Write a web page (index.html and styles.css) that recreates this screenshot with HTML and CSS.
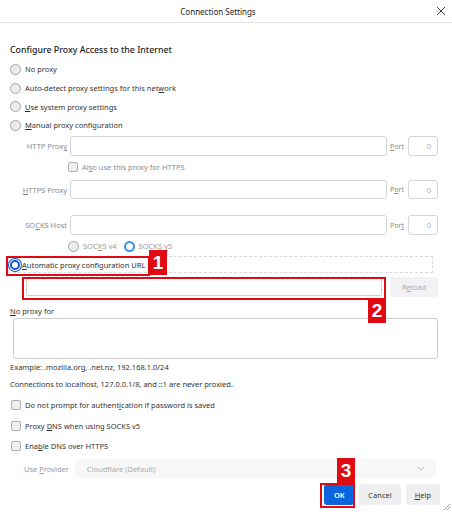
FILE: index.html
```html
<!DOCTYPE html>
<html>
<head>
<meta charset="utf-8">
<link rel="stylesheet" href="styles.css">
</head>
<body>
<div class="dialog">
  <header class="titlebar">
    <span class="title">Connection Settings</span>
    <svg class="close" width="10" height="10" viewBox="0 0 10 10"><path d="M1 1L9 9M9 1L1 9" stroke="#444" stroke-width="1" fill="none"/></svg>
  </header>
  <main class="content">
    <h1 class="heading">Configure Proxy Access to the Internet</h1>
    <div class="radio-list">
      <div class="opt"><span class="radio"></span><span>No proxy</span></div>
      <div class="opt"><span class="radio"></span><span>Auto-detect proxy settings for this net<u>w</u>ork</span></div>
      <div class="opt"><span class="radio"></span><span><u>U</u>se system proxy settings</span></div>
      <div class="opt"><span class="radio"></span><span><u>M</u>anual proxy configuration</span></div>
    </div>
    <div class="manual">
      <div class="field-row">
        <span class="flabel">HTTP Prox<u>y</u></span><span class="input"></span><span class="plabel"><u>P</u>ort</span><span class="port">0</span>
      </div>
      <div class="sub-check"><span class="checkbox"></span><span>Al<u>s</u>o use this proxy for HTTPS</span></div>
      <div class="field-row https">
        <span class="flabel"><u>H</u>TTPS Proxy</span><span class="input"></span><span class="plabel">P<u>o</u>rt</span><span class="port">0</span>
      </div>
      <div class="field-row socks">
        <span class="flabel">SO<u>C</u>KS Host</span><span class="input"></span><span class="plabel">Por<u>t</u></span><span class="port">0</span>
      </div>
      <div class="socks-ver">
        <span class="opt dim"><span class="radio"></span><span>SOC<u>K</u>S v4</span></span>
        <span class="opt dim"><span class="radio on"></span><span>SOCKS <u>v</u>5</span></span>
      </div>
    </div>
    <div class="auto-row">
      <div class="opt auto"><span class="radio focus"></span><span><u>A</u>utomatic proxy configuration URL</span></div>
    </div>
    <div class="pac-row">
      <span class="pac-input"></span>
      <span class="reload">R<u>e</u>load</span>
    </div>
    <div class="np-label"><u>N</u>o proxy for</div>
    <div class="textarea"></div>
    <div class="hint ex">Example: .mozilla.org, .net.nz, 192.168.1.0/24</div>
    <div class="hint conn">Connections to localhost, 127.0.0.1/8, and ::1 are never proxied.</div>
    <div class="checks">
      <div class="opt chk"><span class="checkbox"></span><span>Do not prompt for authent<u>i</u>cation if password is saved</span></div>
      <div class="opt chk"><span class="checkbox"></span><span>Proxy <u>D</u>NS when using SOCKS v5</span></div>
      <div class="opt chk"><span class="checkbox"></span><span>Ena<u>b</u>le DNS over HTTPS</span></div>
    </div>
    <div class="provider-row">
      <span class="prov-label">Use <u>P</u>rovider</span>
      <span class="select"><span>Cloudflare (Default)</span>
        <svg width="8" height="5" viewBox="0 0 8 5"><path d="M1 1L4 4L7 1" stroke="#bbb" stroke-width="1" fill="none"/></svg>
      </span>
    </div>
    <div class="buttons">
      <span class="btn ok">OK</span>
      <span class="btn">Cancel</span>
      <span class="btn"><u>H</u>elp</span>
    </div>
  </main>
  <svg class="grip" width="9" height="9" viewBox="0 0 9 9"><path d="M8 2L2 8M8 5L5 8" stroke="#999" stroke-width="1" fill="none"/></svg>

  <div class="mark box1"></div>
  <div class="badge b1">1</div>
  <div class="mark box2"></div>
  <div class="badge b2">2</div>
  <div class="mark box3"></div>
  <div class="badge b3">3</div>
</div>
</body>
</html>
```

FILE: styles.css
```css
* { box-sizing: border-box; }
html, body { margin: 0; padding: 0; background: #fff; }
body {
  font-family: "Noto Sans", "Open Sans", sans-serif;
  font-size: 7.5px;
  color: #333;
}
u { text-decoration: underline; text-underline-offset: 1px; }

.dialog { position: relative; width: 452px; height: 512px; overflow: hidden; }

.titlebar {
  height: 23px;
  border-bottom: 1px solid #e3e3e3;
  display: flex;
  align-items: center;
  justify-content: center;
  padding-right: 16px;
  position: relative;
}
.title { font-size: 8px; color: #222; }
.close { position: absolute; right: 6px; top: 6px; }

.content { padding: 0 14px 0 10px; display: flex; flex-direction: column; }

.heading {
  margin: 20px 0 0 0;
  height: 14px;
  line-height: 14px;
  font-size: 8.8px;
  font-weight: 500;
  color: #1c1c1c;
}

.radio-list { margin-top: 3px; display: flex; flex-direction: column; }
.opt { display: flex; align-items: center; gap: 4px; height: 18.7px; }

.radio {
  width: 11px; height: 11px;
  border-radius: 50%;
  border: 1px solid #a3a3a8;
  background: #ececef;
  flex: none;
}
.radio.on { border: 2.5px solid #3d8ee8; background: #fff; }
.radio.focus {
  width: 10px; height: 10px;
  border: 2.5px solid #1456d6;
  background: #fff;
  box-shadow: 0 0 0 1px #fff, 0 0 0 2px #1456d6;
  margin-left: 1px;
}

.checkbox {
  width: 10px; height: 10px;
  border-radius: 2px;
  border: 1px solid #b0b0b6;
  background: #eeeef0;
  flex: none;
}

.manual { display: flex; flex-direction: column; margin-top: 1.5px; }
.field-row {
  display: grid;
  grid-template-columns: 57px 1fr 14px 31px;
  column-gap: 3px;
  align-items: center;
  height: 20px;
  color: #8a8a8a;
}
.flabel { text-align: right; }
.input { height: 20px; border: 1px solid #d6d6d6; border-radius: 3px; background: #fff; }
.plabel { font-size: 7px; }
.port {
  height: 20px;
  border: 1px solid #d6d6d6;
  border-radius: 3px;
  text-align: right;
  padding-right: 6px;
  line-height: 18px;
  color: #b4b4b4;
  margin-left: 1px;
}
.sub-check {
  display: flex; align-items: center; gap: 4px;
  height: 16px; margin-top: 3px; padding-left: 58px;
  color: #8a8a8a;
}
.field-row.https { margin-top: 5px; height: 19px; }
.field-row.https .input, .field-row.https .port { height: 19px; }
.field-row.socks { margin-top: 16px; height: 20px; }
.socks-ver { display: flex; gap: 7px; padding-left: 58px; height: 14px; margin-top: 4px; align-items: center; }
.socks-ver .opt { height: 14px; }
.dim { color: #9a9a9a; }

.auto-row {
  margin-top: 3px;
  height: 17px;
  margin-left: -2px;
  margin-right: 5px;
  border: 1px dashed #dadada;
  display: flex;
  align-items: center;
}
.auto-row .opt { height: 15px; gap: 2px; color: #2e2e2e; }

.pac-row { display: flex; gap: 8px; margin-top: 4px; height: 20px; align-items: center; padding-left: 16px; }
.pac-input { flex: 1; height: 18px; border: 1px solid #cfcfcf; border-radius: 2px; }
.reload {
  width: 48px; height: 20px;
  background: #f2f2f4;
  border-radius: 3px;
  color: #ababab;
  display: flex; align-items: center; justify-content: center;
}

.np-label { margin-top: 8px; height: 12px; line-height: 12px; }
.textarea { margin: 1px 0 0 3px; height: 41px; border: 1px solid #cbcbcb; border-radius: 3px; }
.hint { height: 12px; line-height: 12px; color: #333; }
.hint.ex { margin-top: 2px; }
.hint.conn { margin-top: 5px; }

.checks { margin-top: 8px; display: flex; flex-direction: column; gap: 6.5px; }
.opt.chk { height: 14px; }
.checks .checkbox { margin-left: 1px; }

.provider-row { margin-top: 6px; height: 19px; display: flex; align-items: center; gap: 6px; padding-left: 14px; }
.prov-label { color: #9a9a9a; }
.select {
  flex: 1; height: 19px; margin-right: 2px;
  background: #f7f7f8; border-radius: 3px;
  display: flex; align-items: center; justify-content: space-between;
  padding: 0 11px 0 12px; color: #a8a8a8;
}

.buttons { margin-top: 6px; display: flex; justify-content: flex-end; gap: 5px; height: 21px; margin-right: -2px; }
.btn {
  height: 21px; padding: 0 9px;
  background: #efeff1; border-radius: 3px;
  display: flex; align-items: center; justify-content: center;
  color: #333;
}
.btn.ok { background: #0b63de; color: #fff; font-weight: 600; width: 30px; padding: 0; }

.grip { position: absolute; right: 1px; bottom: 1px; }

.mark { position: absolute; border: 2px solid #e10a12; }
.box1 { left: 6px; top: 256px; width: 144px; height: 20px; }
.box2 { left: 22px; top: 277px; width: 364px; height: 23px; }
.box3 { left: 320px; top: 483px; width: 35px; height: 25px; }
.badge {
  position: absolute;
  background: #e10a12;
  color: #fff;
  font-family: "Liberation Sans", Arial, sans-serif;
  font-weight: 700;
  font-size: 19px;
  line-height: 25px;
  text-align: center;
  width: 18px; height: 25px;
}
.b1 { left: 149px; top: 250px; }
.b2 { left: 368px; top: 298px; }
.b3 { left: 337px; top: 458px; }
```
